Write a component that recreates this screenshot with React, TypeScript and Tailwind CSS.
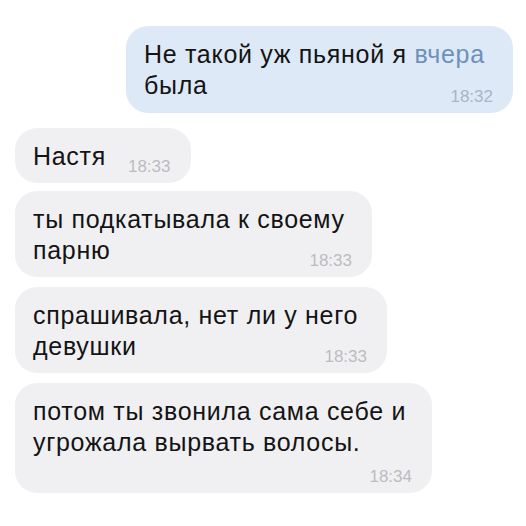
import React from "react";

type Msg = {
  lines: React.ReactNode[];
  time: string;
  out?: boolean;
  width?: string;
  timeMt: string;
  mt: string;
};

const msgs: Msg[] = [
  {
    out: true,
    lines: [
      <>
        Не такой уж пьяной я <span className="text-[#6d91b9]">вчера</span>
      </>,
      "была",
    ],
    time: "18:32",
    width: "w-[387px]",
    timeMt: "mt-[18px]",
    mt: "mt-0",
  },
  { lines: ["Настя"], time: "18:33", timeMt: "mt-[17px]", mt: "mt-[15px]" },
  {
    lines: ["ты подкатывала к своему", "парню"],
    time: "18:33",
    width: "w-[357px]",
    timeMt: "mt-[17px]",
    mt: "mt-[8px]",
  },
  {
    lines: ["спрашивала, нет ли у него", "девушки"],
    time: "18:33",
    width: "w-[372px]",
    timeMt: "mt-[17px]",
    mt: "mt-[10px]",
  },
  {
    lines: ["потом ты звонила сама себе и", "угрожала вырвать волосы."],
    time: "18:34",
    width: "w-[417px]",
    timeMt: "mt-[10px]",
    mt: "mt-[10px]",
  },
];

function Bubble({ m }: { m: Msg }) {
  return (
    <div
      className={`${m.mt} ${m.out ? "self-end bg-[#dde9f6]" : "self-start bg-[#f0f0f2]"} ${
        m.width ?? "w-fit"
      } flow-root rounded-[22px] pl-[18px] pr-[20px] pt-[13px] pb-[7px] text-[25px] leading-[31px] tracking-[0.7px] text-[#141414]`}
    >
      {m.lines.map((l, i) => (
        <React.Fragment key={i}>
          {i > 0 && <br />}
          <span className="whitespace-nowrap">{l}</span>
        </React.Fragment>
      ))}
      <span
        className={`float-right ${m.timeMt} ml-[22px] text-[17px] leading-[18px] tracking-normal ${
          m.out ? "text-[#a7b6c6]" : "text-[#bcbcc0]"
        }`}
      >
        {m.time}
      </span>
    </div>
  );
}

export default function App() {
  return (
    <div className="w-[526px] h-[526px] bg-white flex flex-col pt-[26px] pl-[15px] pr-[13px] font-['Liberation_Sans',Arial,sans-serif]">
      {msgs.map((m, i) => (
        <Bubble key={i} m={m} />
      ))}
    </div>
  );
}
